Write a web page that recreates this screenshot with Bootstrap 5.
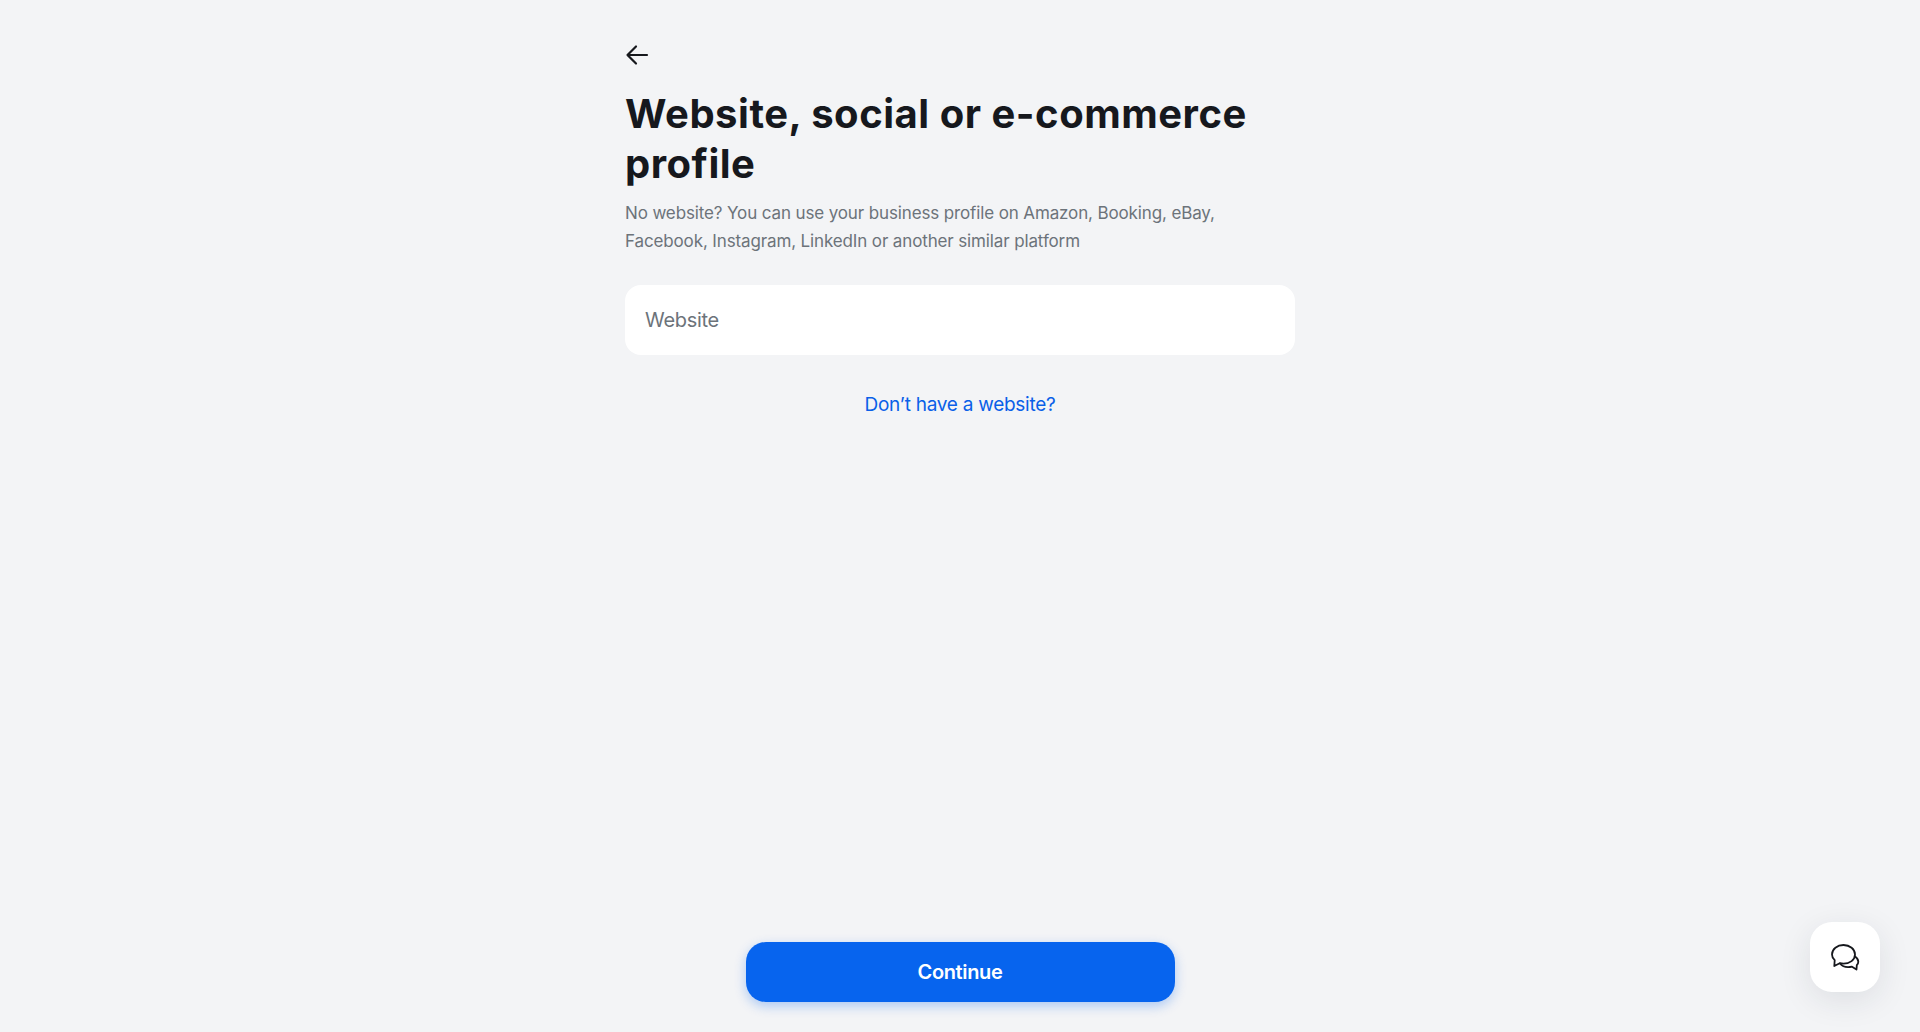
<!DOCTYPE html>
<html lang="en">
<head>
<meta charset="utf-8">
<title>Website, social or e-commerce profile</title>
<link href="https://cdn.jsdelivr.net/npm/bootstrap@5.3.0/dist/css/bootstrap.min.css" rel="stylesheet">
<style>
html,body{height:100%}
body{background:#f3f4f6;font-family:Inter,"Liberation Sans",sans-serif;color:#16181d}
.shell{height:100vh;overflow:hidden}
.pane{width:670px;padding-top:41px}
.back-btn{width:24px;height:24px;padding:0;border:0;background:none;line-height:0;color:#16181d}
.head-title{font-size:40px;line-height:50px;font-weight:700;letter-spacing:.52px;margin:22px 0 0}
.sub-text{font-size:17px;line-height:28px;letter-spacing:-.13px;color:#6c737a;margin:10px 0 0}
.site-input{height:70px;border:0;border-radius:16px;padding:0 20px;font-size:20px;letter-spacing:-.3px;margin-top:30px;background:#fff;box-shadow:none}
.site-input::placeholder{color:#6c737a}
.alt-link{font-size:19px;line-height:28px;letter-spacing:-.26px;color:#0a60e8;text-decoration:none;margin-top:36px}
.foot-bar{padding-bottom:30px}
.go-btn{width:429px;height:60px;border:0;border-radius:20px;background:#0764ee;color:#fff;font-size:20px;font-weight:600;letter-spacing:-.35px;box-shadow:0 4px 12px rgba(7,100,238,.3)}
.go-btn:hover{background:#0764ee;color:#fff}
.chat-btn{position:fixed;left:1810px;top:922px;width:70px;height:70px;border:0;border-radius:22px;background:#fff;box-shadow:0 8px 32px rgba(30,40,60,.1);color:#16181d;padding:0}
</style>
</head>
<body>
<div class="shell d-flex flex-column align-items-center">
  <main class="pane flex-grow-1 d-flex flex-column">
    <div><button class="back-btn" type="button" aria-label="Back">
      <svg width="24" height="24" viewBox="0 0 24 24" fill="none" stroke="currentColor" stroke-width="2.2" stroke-linecap="round" stroke-linejoin="round"><path d="M22 12H2.500M11 3.500L2.500 12l8.500 8.500"/></svg>
    </button></div>
    <h1 class="head-title">Website, social or e-commerce profile</h1>
    <p class="sub-text">No website? You can use your business profile on Amazon, Booking, eBay, Facebook, Instagram, LinkedIn or another similar platform</p>
    <input class="form-control site-input" type="text" placeholder="Website" aria-label="Website">
    <a class="alt-link text-center" href="#">Don’t have a website?</a>
  </main>
  <div class="foot-bar d-flex justify-content-center">
    <button class="btn go-btn" type="button">Continue</button>
  </div>
</div>
<button class="chat-btn d-flex align-items-center justify-content-center" type="button" aria-label="Chat">
  <svg width="30" height="30" viewBox="0 0 30 30" fill="none" stroke="currentColor" stroke-width="1.8" stroke-linejoin="round" stroke-linecap="round"><path d="M13.500 3C7.200 3 2 7 2 12.500c0 2.300 1 4.200 2.700 5.700L4.300 24l5.400-2.800c1.200.3 2.500.5 3.800.5C19.800 21.700 25 17.800 25 12.500S19.800 3 13.500 3z"/><path d="M25 14.500c2 1.300 3.300 3.200 3.300 5.200 0 1.300-.5 2.500-1.500 3.500l-.3 4.300-4.500-2.800c-4.500 1-9.500 0-12-3.200"/></svg>
</button>
<script src="https://cdn.jsdelivr.net/npm/bootstrap@5.3.0/dist/js/bootstrap.bundle.min.js"></script>
</body>
</html>
